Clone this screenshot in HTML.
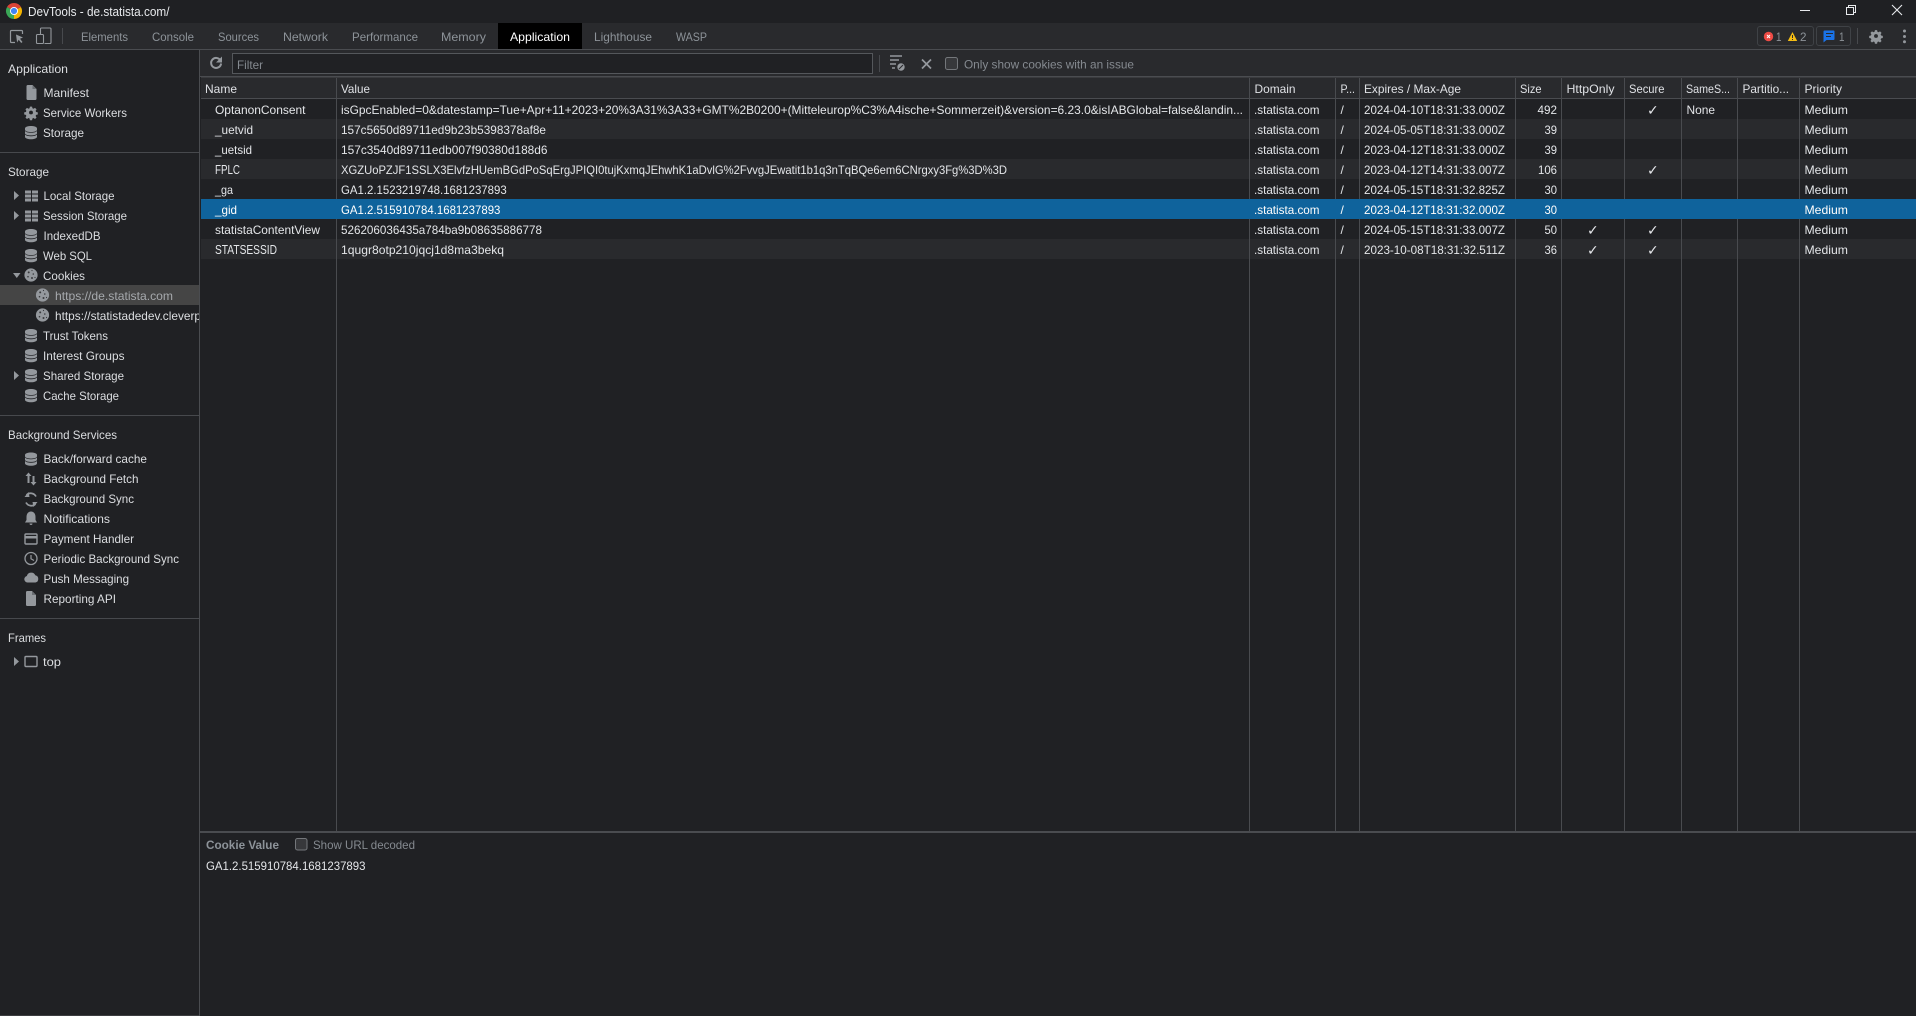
<!DOCTYPE html>
<html lang="en">
<head>
<meta charset="utf-8">
<title>DevTools - de.statista.com/</title>
<style>
html,body{margin:0;padding:0;background:#202124;width:1916px;height:1016px;overflow:hidden}
svg{display:block}
text{font-family:"Liberation Sans",sans-serif;font-size:12px;fill:#dfe1e5;white-space:pre}
.tab{fill:#8d9399}
.side{fill:#dcdee1}
.h{fill:#dfe1e5}
.c{fill:#e4e6e9}
.chk{font-family:"DejaVu Sans",sans-serif;font-size:14px;fill:#e4e6e9}
.dim{fill:#858a90}
</style>
</head>
<body>
<svg width="1916" height="1016" viewBox="0 0 1916 1016" xmlns="http://www.w3.org/2000/svg">
<defs>
<g id="db" fill="#94989d">
<path d="M0 2.500C0 .8 3 0 6 0s6 .8 6 2.500v1.300c0 1.500-3 2.300-6 2.300s-6-.8-6-2.300z"/>
<path d="M0 5c1 1.200 3.500 1.800 6 1.800s5-.6 6-1.800v2.200c0 1.400-3 2.200-6 2.200s-6-.8-6-2.200z"/>
<path d="M0 8.500c1 1.200 3.500 1.800 6 1.800s5-.6 6-1.800v2.400c0 1.400-3 2.400-6 2.400s-6-1-6-2.400z"/>
</g>
<g id="grid" fill="#94989d">
<rect x="0" y="0" width="6" height="3"/><rect x="7" y="0" width="6" height="3"/>
<rect x="0" y="4" width="6" height="3"/><rect x="7" y="4" width="6" height="3"/>
<rect x="0" y="8" width="6" height="3"/><rect x="7" y="8" width="6" height="3"/>
</g>
<g id="doc"><path d="M0 1.200C0 .5.500 0 1.200 0H6l4 4v9.800c0 .7-.5 1.200-1.200 1.200H1.200C.5 15 0 14.500 0 13.800z" fill="#94989d"/><path d="M6 0v4h4z" fill="#6a6e73"/></g>
<g id="gear"><path transform="scale(.84)" fill="#94989d" fill-rule="evenodd" d="M-1.300-7h2.600l.4 2 1.300.6 1.800-1.100 1.800 1.800-1.100 1.800.6 1.300 2 .4v2.600l-2 .4-.6 1.300 1.100 1.800-1.800 1.800-1.800-1.100-1.300.6-.4 2h-2.600l-.4-2-1.300-.6-1.800 1.100-1.800-1.800 1.100-1.800-.6-1.300-2-.4v-2.600l2-.4.6-1.300-1.100-1.800 1.800-1.800 1.800 1.100 1.300-.6zM0-2.300a2.300 2.300 0 1 0 0 4.600 2.300 2.300 0 0 0 0-4.600z"/></g>
<g id="cookie"><circle r="6.600" fill="#94989d"/><circle cx="-2.300" cy="-2.600" r="1" fill="#3a3b3e"/><circle cx="2.300" cy="-1" r=".8" fill="#3a3b3e"/><circle cx="-3" cy="1.700" r=".8" fill="#3a3b3e"/><circle cx="1" cy="3" r="1" fill="#3a3b3e"/><circle cx="4" cy="2.500" r=".6" fill="#3a3b3e"/><circle cx="1" cy="-4.500" r=".6" fill="#3a3b3e"/></g>
<path id="right" d="M0 0l5 4.500L0 9z" fill="#94989d"/>
<clipPath id="sc"><rect x="0" y="300" width="199" height="30"/></clipPath>
</defs>

<rect width="1916" height="1016" fill="#202124"/>
<!-- title bar -->
<rect width="1916" height="23" fill="#1f2023"/>
<g>
<path d="M14 11L7.070 7A8 8 0 0 1 20.930 7z" fill="#db4437"/>
<path d="M14 11L20.930 7A8 8 0 0 1 14 19z" fill="#f4b400"/>
<path d="M14 11L14 19A8 8 0 0 1 7.070 7z" fill="#3aa757"/>
<circle cx="14" cy="11" r="4" fill="#fff"/><circle cx="14" cy="11" r="3.100" fill="#4285f4"/>
</g>
<text x="28" y="16" textLength="141.500" lengthAdjust="spacingAndGlyphs" style="font-size:13px;fill:#e8eaed">DevTools - de.statista.com/</text>
<rect x="1800" y="10" width="10" height="1" fill="#e8eaed"/>
<path d="M1846.500 7.500h7v7h-7zM1848.500 7.500v-2h7v7h-2" fill="none" stroke="#e8eaed"/>
<path d="M1892 5l10 10M1902 5l-10 10" stroke="#e8eaed" stroke-width="1.100"/>

<!-- toolbar -->
<rect y="23" width="1916" height="26" fill="#292a2d"/>
<rect y="49" width="1916" height="1" fill="#4a4c50"/>
<path d="M15 42.500h-3.500a1 1 0 0 1-1-1v-10a1 1 0 0 1 1-1h10a1 1 0 0 1 1 1v2.500" fill="none" stroke="#94989d" stroke-width="1.200"/>
<path d="M16 34.500l7 3-3 1.200 2.500 3.300-1.300 1-2.500-3.200-1.600 2.700z" fill="#94989d"/>
<path d="M40.500 34v-5a1 1 0 0 1 1-1h8.500a1 1 0 0 1 1 1v13.500a1 1 0 0 1-1 1h-5.500" fill="none" stroke="#94989d" stroke-width="1.100"/>
<rect x="36.500" y="34.500" width="7" height="9" rx="1" fill="none" stroke="#94989d" stroke-width="1.100"/>
<rect x="62" y="28" width="1" height="16" fill="#47494d"/>
<text class="tab" x="81" y="41" textLength="47" lengthAdjust="spacingAndGlyphs">Elements</text>
<text class="tab" x="152" y="41" textLength="42" lengthAdjust="spacingAndGlyphs">Console</text>
<text class="tab" x="218" y="41" textLength="41" lengthAdjust="spacingAndGlyphs">Sources</text>
<text class="tab" x="283" y="41" textLength="45" lengthAdjust="spacingAndGlyphs">Network</text>
<text class="tab" x="352" y="41" textLength="66" lengthAdjust="spacingAndGlyphs">Performance</text>
<text class="tab" x="441" y="41" textLength="45" lengthAdjust="spacingAndGlyphs">Memory</text>
<rect x="498" y="23" width="84" height="26" fill="#000"/>
<text x="510" y="41" textLength="60" lengthAdjust="spacingAndGlyphs" style="fill:#fff">Application</text>
<text class="tab" x="594" y="41" textLength="58" lengthAdjust="spacingAndGlyphs">Lighthouse</text>
<text class="tab" x="676" y="41" textLength="31" lengthAdjust="spacingAndGlyphs">WASP</text>

<rect x="1757.500" y="26.500" width="56" height="19" rx="2.500" fill="none" stroke="#3f4246"/>
<circle cx="1768.500" cy="36.500" r="4.700" fill="#ee4b45"/>
<path d="M1767 35l3 3M1770 35l-3 3" stroke="#fff" stroke-width="1"/>
<text x="1776" y="41" textLength="5.500" lengthAdjust="spacingAndGlyphs" style="fill:#8d9399">1</text>
<path d="M1792.500 32l4.700 9h-9.400z" fill="#f5bd14"/>
<rect x="1792" y="35" width="1" height="3" fill="#292a2d"/><rect x="1792" y="39" width="1" height="1" fill="#292a2d"/>
<text x="1800" y="41" textLength="6.500" lengthAdjust="spacingAndGlyphs" style="fill:#8d9399">2</text>
<rect x="1816.500" y="26.500" width="34" height="19" rx="2.500" fill="none" stroke="#3f4246"/>
<path d="M1824.500 30.500h9a1 1 0 0 1 1 1v7.500a1 1 0 0 1-1 1h-7l-3 2.500v-11a1 1 0 0 1 1-1z" fill="#1a73e8"/>
<rect x="1826" y="33" width="7" height="1" fill="#292a2d"/><rect x="1826" y="36" width="5" height="1" fill="#292a2d"/>
<text x="1839" y="41" textLength="5.500" lengthAdjust="spacingAndGlyphs" style="fill:#8d9399">1</text>
<rect x="1857" y="28" width="1" height="16" fill="#47494d"/>
<use href="#gear" x="1876" y="36"/>
<circle cx="1904.500" cy="31" r="1.500" fill="#94989d"/><circle cx="1904.500" cy="36.500" r="1.500" fill="#94989d"/><circle cx="1904.500" cy="41.800" r="1.500" fill="#94989d"/>

<!-- filter bar -->
<rect x="200" y="50" width="1716" height="26" fill="#292a2d"/>
<rect x="200" y="76" width="1716" height="1" fill="#4a4c50"/>
<path d="M220.500 60.500a5 5 0 1 0 .6 3" fill="none" stroke="#94989d" stroke-width="2"/>
<path d="M222 56.500v6h-6z" fill="#94989d"/>
<rect x="232.500" y="53.500" width="640" height="20" fill="#202124" stroke="#54575b"/>
<text class="dim" x="237" y="69" textLength="26" lengthAdjust="spacingAndGlyphs">Filter</text>
<rect x="879" y="55" width="1" height="17" fill="#47494d"/>
<path d="M890 56h12M890 60h9M890 64h6M892 68h3" stroke="#94989d" stroke-width="1.500"/>
<circle cx="901" cy="67" r="3.700" fill="#94989d"/><path d="M899 69l4-4" stroke="#292a2d" stroke-width="1.100"/>
<path d="M922 59.500l9 9M931 59.500l-9 9" stroke="#94989d" stroke-width="1.700"/>
<rect x="945.500" y="57.500" width="12" height="12" rx="2" fill="#37383b" stroke="#74777b"/>
<text class="dim" x="964" y="68.500" textLength="170" lengthAdjust="spacingAndGlyphs">Only show cookies with an issue</text>

<!-- table -->
<rect x="201" y="78" width="1715" height="20" fill="#292a2d"/>
<rect x="201" y="77" width="1715" height="1" fill="#3a3b3e"/>
<rect x="201" y="98" width="1715" height="1" fill="#4a4c50"/>
<rect x="201" y="119" width="1715" height="20" fill="#292a2d"/>
<rect x="201" y="159" width="1715" height="20" fill="#292a2d"/>
<rect x="201" y="239" width="1715" height="20" fill="#292a2d"/>
<g fill="#494b4f">
<rect x="336" y="78" width="1" height="753"/><rect x="1249" y="78" width="1" height="753"/><rect x="1335" y="78" width="1" height="753"/><rect x="1359" y="78" width="1" height="753"/><rect x="1515" y="78" width="1" height="753"/><rect x="1561" y="78" width="1" height="753"/><rect x="1624" y="78" width="1" height="753"/><rect x="1681" y="78" width="1" height="753"/><rect x="1737" y="78" width="1" height="753"/><rect x="1799" y="78" width="1" height="753"/>
</g>
<rect x="201" y="199" width="1715" height="20" fill="#0f639c"/>

<g class="hd">
<text class="h" x="205" y="93" textLength="32" lengthAdjust="spacingAndGlyphs">Name</text>
<text class="h" x="341" y="93" textLength="29" lengthAdjust="spacingAndGlyphs">Value</text>
<text class="h" x="1254.500" y="93" textLength="41" lengthAdjust="spacingAndGlyphs">Domain</text>
<text class="h" x="1340.500" y="93" textLength="14.500" lengthAdjust="spacingAndGlyphs">P...</text>
<text class="h" x="1364" y="93" textLength="97" lengthAdjust="spacingAndGlyphs">Expires / Max-Age</text>
<text class="h" x="1520" y="93" textLength="21.500" lengthAdjust="spacingAndGlyphs">Size</text>
<text class="h" x="1566.500" y="93" textLength="48" lengthAdjust="spacingAndGlyphs">HttpOnly</text>
<text class="h" x="1629" y="93" textLength="35.500" lengthAdjust="spacingAndGlyphs">Secure</text>
<text class="h" x="1686" y="93" textLength="44" lengthAdjust="spacingAndGlyphs">SameS...</text>
<text class="h" x="1742.500" y="93" textLength="46.500" lengthAdjust="spacingAndGlyphs">Partitio...</text>
<text class="h" x="1804.500" y="93" textLength="37.500" lengthAdjust="spacingAndGlyphs">Priority</text>
</g>

<text class="c" x="215" y="114" textLength="90.500" lengthAdjust="spacingAndGlyphs">OptanonConsent</text>
<text class="c" x="215" y="134" textLength="38" lengthAdjust="spacingAndGlyphs">_uetvid</text>
<text class="c" x="215" y="154" textLength="37" lengthAdjust="spacingAndGlyphs">_uetsid</text>
<text class="c" x="215" y="174" textLength="25" lengthAdjust="spacingAndGlyphs" style="font-size:13px">FPLC</text>
<text class="c" x="215" y="194" textLength="18" lengthAdjust="spacingAndGlyphs">_ga</text>
<text class="c" x="215" y="214" textLength="22" lengthAdjust="spacingAndGlyphs" style="fill:#fff">_gid</text>
<text class="c" x="215" y="234" textLength="105" lengthAdjust="spacingAndGlyphs">statistaContentView</text>
<text class="c" x="215" y="254" textLength="62" lengthAdjust="spacingAndGlyphs" style="font-size:13px">STATSESSID</text>

<text class="c" x="341" y="114" textLength="902" lengthAdjust="spacingAndGlyphs">isGpcEnabled=0&amp;datestamp=Tue+Apr+11+2023+20%3A31%3A33+GMT%2B0200+(Mitteleurop%C3%A4ische+Sommerzeit)&amp;version=6.23.0&amp;isIABGlobal=false&amp;landin...</text>
<text class="c" x="341" y="134" textLength="205" lengthAdjust="spacingAndGlyphs">157c5650d89711ed9b23b5398378af8e</text>
<text class="c" x="341" y="154" textLength="206.500" lengthAdjust="spacingAndGlyphs">157c3540d89711edb007f90380d188d6</text>
<text class="c" x="341" y="174" textLength="666" lengthAdjust="spacingAndGlyphs">XGZUoPZJF1SSLX3ElvfzHUemBGdPoSqErgJPIQI0tujKxmqJEhwhK1aDvlG%2FvvgJEwatit1b1q3nTqBQe6em6CNrgxy3Fg%3D%3D</text>
<text class="c" x="341" y="194" textLength="165.700" lengthAdjust="spacingAndGlyphs">GA1.2.1523219748.1681237893</text>
<text class="c" x="341" y="214" textLength="159.400" lengthAdjust="spacingAndGlyphs" style="fill:#fff">GA1.2.515910784.1681237893</text>
<text class="c" x="341" y="234" textLength="201" lengthAdjust="spacingAndGlyphs">526206036435a784ba9b08635886778</text>
<text class="c" x="341" y="254" textLength="163" lengthAdjust="spacingAndGlyphs">1qugr8otp210jqcj1d8ma3bekq</text>

<g>
<text class="c" x="1254" y="114" textLength="65.500" lengthAdjust="spacingAndGlyphs">.statista.com</text>
<text class="c" x="1254" y="134" textLength="65.500" lengthAdjust="spacingAndGlyphs">.statista.com</text>
<text class="c" x="1254" y="154" textLength="65.500" lengthAdjust="spacingAndGlyphs">.statista.com</text>
<text class="c" x="1254" y="174" textLength="65.500" lengthAdjust="spacingAndGlyphs">.statista.com</text>
<text class="c" x="1254" y="194" textLength="65.500" lengthAdjust="spacingAndGlyphs">.statista.com</text>
<text class="c" x="1254" y="214" textLength="65.500" lengthAdjust="spacingAndGlyphs" style="fill:#fff">.statista.com</text>
<text class="c" x="1254" y="234" textLength="65.500" lengthAdjust="spacingAndGlyphs">.statista.com</text>
<text class="c" x="1254" y="254" textLength="65.500" lengthAdjust="spacingAndGlyphs">.statista.com</text>
<text class="c" x="1340.500" y="114">/</text><text class="c" x="1340.500" y="134">/</text><text class="c" x="1340.500" y="154">/</text><text class="c" x="1340.500" y="174">/</text><text class="c" x="1340.500" y="194">/</text><text class="c" x="1340.500" y="214" style="fill:#fff">/</text><text class="c" x="1340.500" y="234">/</text><text class="c" x="1340.500" y="254">/</text>
<text class="c" x="1364" y="114" textLength="141" lengthAdjust="spacingAndGlyphs">2024-04-10T18:31:33.000Z</text>
<text class="c" x="1364" y="134" textLength="141" lengthAdjust="spacingAndGlyphs">2024-05-05T18:31:33.000Z</text>
<text class="c" x="1364" y="154" textLength="141" lengthAdjust="spacingAndGlyphs">2023-04-12T18:31:33.000Z</text>
<text class="c" x="1364" y="174" textLength="141" lengthAdjust="spacingAndGlyphs">2023-04-12T14:31:33.007Z</text>
<text class="c" x="1364" y="194" textLength="141" lengthAdjust="spacingAndGlyphs">2024-05-15T18:31:32.825Z</text>
<text class="c" x="1364" y="214" textLength="141" lengthAdjust="spacingAndGlyphs" style="fill:#fff">2023-04-12T18:31:32.000Z</text>
<text class="c" x="1364" y="234" textLength="141" lengthAdjust="spacingAndGlyphs">2024-05-15T18:31:33.007Z</text>
<text class="c" x="1364" y="254" textLength="141" lengthAdjust="spacingAndGlyphs">2023-10-08T18:31:32.511Z</text>
<text class="c" x="1537.500" y="114" textLength="19.500" lengthAdjust="spacingAndGlyphs">492</text>
<text class="c" x="1544.500" y="134" textLength="12.500" lengthAdjust="spacingAndGlyphs">39</text>
<text class="c" x="1544.500" y="154" textLength="12.500" lengthAdjust="spacingAndGlyphs">39</text>
<text class="c" x="1538" y="174" textLength="19" lengthAdjust="spacingAndGlyphs">106</text>
<text class="c" x="1544.500" y="194" textLength="12.500" lengthAdjust="spacingAndGlyphs">30</text>
<text class="c" x="1544.500" y="214" textLength="12.500" lengthAdjust="spacingAndGlyphs" style="fill:#fff">30</text>
<text class="c" x="1544.500" y="234" textLength="12.500" lengthAdjust="spacingAndGlyphs">50</text>
<text class="c" x="1544.500" y="254" textLength="12.500" lengthAdjust="spacingAndGlyphs">36</text>
<text class="chk" x="1647" y="115">✓</text>
<text class="chk" x="1647" y="175">✓</text>
<text class="chk" x="1587" y="235">✓</text><text class="chk" x="1647" y="235">✓</text>
<text class="chk" x="1587" y="255">✓</text><text class="chk" x="1647" y="255">✓</text>
<text class="c" x="1686.500" y="114" textLength="28.500" lengthAdjust="spacingAndGlyphs">None</text>
<text class="c" x="1804.500" y="114" textLength="43.500" lengthAdjust="spacingAndGlyphs">Medium</text>
<text class="c" x="1804.500" y="134" textLength="43.500" lengthAdjust="spacingAndGlyphs">Medium</text>
<text class="c" x="1804.500" y="154" textLength="43.500" lengthAdjust="spacingAndGlyphs">Medium</text>
<text class="c" x="1804.500" y="174" textLength="43.500" lengthAdjust="spacingAndGlyphs">Medium</text>
<text class="c" x="1804.500" y="194" textLength="43.500" lengthAdjust="spacingAndGlyphs">Medium</text>
<text class="c" x="1804.500" y="214" textLength="43.500" lengthAdjust="spacingAndGlyphs" style="fill:#fff">Medium</text>
<text class="c" x="1804.500" y="234" textLength="43.500" lengthAdjust="spacingAndGlyphs">Medium</text>
<text class="c" x="1804.500" y="254" textLength="43.500" lengthAdjust="spacingAndGlyphs">Medium</text>
</g>

<!-- bottom panel -->
<rect x="200" y="831" width="1716" height="2" fill="#4a4c50"/>
<text x="206" y="849" textLength="73" lengthAdjust="spacingAndGlyphs" style="fill:#8d9399;font-weight:bold">Cookie Value</text>
<rect x="295.500" y="838.500" width="11.500" height="11.500" rx="2" fill="#37383b" stroke="#74777b"/>
<text class="dim" x="313" y="849" textLength="102" lengthAdjust="spacingAndGlyphs">Show URL decoded</text>
<text class="c" x="206" y="870" textLength="159.500" lengthAdjust="spacingAndGlyphs">GA1.2.515910784.1681237893</text>

<!-- sidebar -->
<rect x="199" y="50" width="1" height="966" fill="#4a4c50"/>
<rect x="0" y="1015" width="199" height="1" fill="#3c3d40"/>
<rect x="0" y="152" width="199" height="1" fill="#47494d"/>
<rect x="0" y="415" width="199" height="1" fill="#47494d"/>
<rect x="0" y="618" width="199" height="1" fill="#47494d"/>
<rect x="0" y="285" width="199" height="20" fill="#454545"/>

<text class="side" x="8" y="73" textLength="60" lengthAdjust="spacingAndGlyphs">Application</text>
<use href="#doc" x="26.500" y="85"/>
<text class="side" x="43.500" y="97" textLength="45.500" lengthAdjust="spacingAndGlyphs">Manifest</text>
<use href="#gear" x="31" y="112.500"/>
<text class="side" x="43" y="117" textLength="84" lengthAdjust="spacingAndGlyphs">Service Workers</text>
<use href="#db" x="25" y="126"/>
<text class="side" x="43" y="137" textLength="41" lengthAdjust="spacingAndGlyphs">Storage</text>

<text class="side" x="8" y="176" textLength="41" lengthAdjust="spacingAndGlyphs">Storage</text>
<use href="#right" x="14" y="191"/>
<use href="#grid" x="25" y="190.500"/>
<text class="side" x="43.500" y="200" textLength="71" lengthAdjust="spacingAndGlyphs">Local Storage</text>
<use href="#right" x="14" y="211"/>
<use href="#grid" x="25" y="210.500"/>
<text class="side" x="43" y="220" textLength="84" lengthAdjust="spacingAndGlyphs">Session Storage</text>
<use href="#db" x="25" y="229"/>
<text class="side" x="43.500" y="240" textLength="57" lengthAdjust="spacingAndGlyphs">IndexedDB</text>
<use href="#db" x="25" y="249"/>
<text class="side" x="43" y="260" textLength="49" lengthAdjust="spacingAndGlyphs">Web SQL</text>
<path d="M13 273h7.500l-3.700 5z" fill="#94989d"/>
<use href="#cookie" x="31" y="275"/>
<text class="side" x="43" y="280" textLength="42" lengthAdjust="spacingAndGlyphs">Cookies</text>
<use href="#cookie" x="42.500" y="295"/>
<text x="55" y="300" textLength="118" lengthAdjust="spacingAndGlyphs" style="fill:#a6a9ad">https://de.statista.com</text>
<use href="#cookie" x="42.500" y="315"/>
<text class="side" x="55" y="320" textLength="146" lengthAdjust="spacingAndGlyphs" clip-path="url(#sc)">https://statistadedev.cleverp</text>
<use href="#db" x="25" y="329"/>
<text class="side" x="43" y="340" textLength="65" lengthAdjust="spacingAndGlyphs">Trust Tokens</text>
<use href="#db" x="25" y="349"/>
<text class="side" x="43" y="360" textLength="81.500" lengthAdjust="spacingAndGlyphs">Interest Groups</text>
<use href="#right" x="14" y="371"/>
<use href="#db" x="25" y="369"/>
<text class="side" x="43" y="380" textLength="81" lengthAdjust="spacingAndGlyphs">Shared Storage</text>
<use href="#db" x="25" y="389"/>
<text class="side" x="43" y="400" textLength="76" lengthAdjust="spacingAndGlyphs">Cache Storage</text>

<text class="side" x="8" y="439" textLength="109" lengthAdjust="spacingAndGlyphs">Background Services</text>
<use href="#db" x="25" y="452.500"/>
<text class="side" x="43.500" y="463" textLength="103.500" lengthAdjust="spacingAndGlyphs">Back/forward cache</text>
<path d="M28.500 472.500l3 3.500h-2v7h-2v-7h-2zM33.500 485.500l-3-3.500h2v-6h2v6h2z" fill="#94989d"/>
<text class="side" x="43.500" y="483" textLength="95" lengthAdjust="spacingAndGlyphs">Background Fetch</text>
<path d="M36 496.500a6 6 0 0 0-9.500-1.500M26 502.500a6 6 0 0 0 9.500 1.500" fill="none" stroke="#94989d" stroke-width="1.700"/>
<path d="M28.500 492l1 5h-5zM33.500 507l-1-5h5z" fill="#94989d"/>
<text class="side" x="43.500" y="503" textLength="90.500" lengthAdjust="spacingAndGlyphs">Background Sync</text>
<path d="M31 511.500c3 0 4.500 2.500 4.500 5.500v3l1.500 2.500H25l1.500-2.500v-3c0-3 1.500-5.500 4.500-5.500zM29.500 523.500h3a1.500 1.500 0 0 1-3 0z" fill="#94989d"/>
<text class="side" x="43.500" y="523" textLength="66.500" lengthAdjust="spacingAndGlyphs">Notifications</text>
<rect x="25" y="534" width="12" height="10" rx="1" fill="none" stroke="#94989d" stroke-width="1.400"/>
<rect x="25" y="536" width="12" height="2.500" fill="#94989d"/>
<text class="side" x="43.500" y="543" textLength="90.500" lengthAdjust="spacingAndGlyphs">Payment Handler</text>
<circle cx="31" cy="558.500" r="6" fill="none" stroke="#94989d" stroke-width="1.300"/>
<path d="M31 555v3.800l3 1.700" fill="none" stroke="#94989d" stroke-width="1.200"/>
<text class="side" x="43.500" y="563" textLength="135.500" lengthAdjust="spacingAndGlyphs">Periodic Background Sync</text>
<path d="M27.500 582.500a3.300 3.300 0 0 1-.7-6.500 4.500 4.500 0 0 1 8.500-.7 3.700 3.700 0 0 1 .2 7.200z" fill="#94989d"/>
<text class="side" x="43.500" y="583" textLength="85.500" lengthAdjust="spacingAndGlyphs">Push Messaging</text>
<use href="#doc" x="26" y="591"/>
<text class="side" x="43.500" y="603" textLength="72.500" lengthAdjust="spacingAndGlyphs">Reporting API</text>

<text class="side" x="8" y="642" textLength="38" lengthAdjust="spacingAndGlyphs">Frames</text>
<use href="#right" x="14" y="657"/>
<rect x="25" y="656.500" width="12" height="10" rx="1" fill="none" stroke="#94989d" stroke-width="1.400"/>
<text class="side" x="43" y="666" textLength="18" lengthAdjust="spacingAndGlyphs">top</text>
</svg>
</body>
</html>
